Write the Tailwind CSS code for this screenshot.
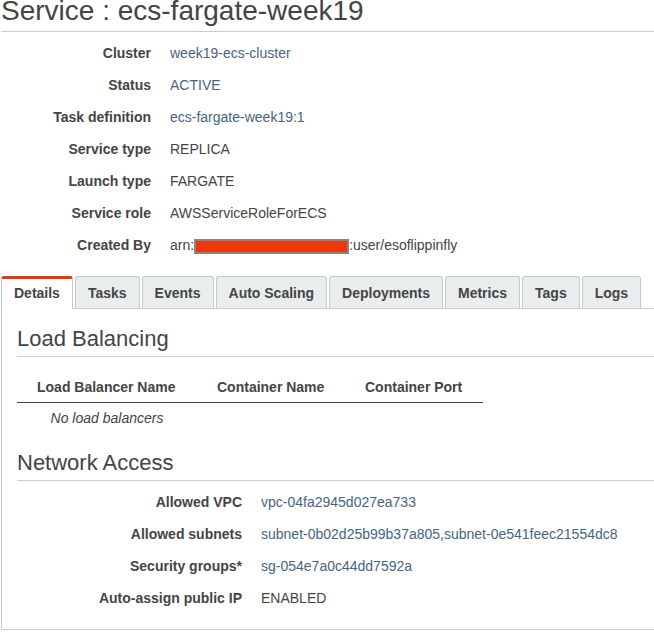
<!DOCTYPE html>
<html lang="en">
<head>
<meta charset="utf-8">
<meta name="viewport" content="width=device-width, initial-scale=1">
<title>Service : ecs-fargate-week19</title>
<script src="https://cdn.jsdelivr.net/npm/@tailwindcss/browser@4"></script>
</head>
<body class="bg-white font-['Liberation_Sans',Arial,sans-serif] text-sm text-[#444]">
<main class="pl-px">
  <h1 class="border-b border-[#c8cccc] pb-[9px] text-[28px] leading-[22px]">Service : ecs-fargate-week19</h1>

  <dl class="grid grid-cols-[150px_1fr] gap-x-[19px] pt-[5px] leading-8">
    <dt class="text-right font-bold">Cluster</dt>
    <dd><a href="#" class="text-[#456581]">week19-ecs-cluster</a></dd>
    <dt class="text-right font-bold">Status</dt>
    <dd class="text-[#456581]">ACTIVE</dd>
    <dt class="text-right font-bold">Task definition</dt>
    <dd><a href="#" class="text-[#456581]">ecs-fargate-week19:1</a></dd>
    <dt class="text-right font-bold">Service type</dt>
    <dd>REPLICA</dd>
    <dt class="text-right font-bold">Launch type</dt>
    <dd>FARGATE</dd>
    <dt class="text-right font-bold">Service role</dt>
    <dd>AWSServiceRoleForECS</dd>
    <dt class="text-right font-bold">Created By</dt>
    <dd class="flex items-center">arn:<span class="mt-[3px] h-[15px] w-[155px] border-2 border-[#8c8482] bg-[#ee380b]"></span>:user/esoflippinfly</dd>
  </dl>

  <div role="tablist" class="mt-[15px] flex gap-[2px] whitespace-nowrap font-bold">
    <button type="button" role="tab" aria-selected="true" class="relative z-10 -mb-px h-[33px] rounded-t-[3px] border-x border-t-[3px] border-[#c5cbcb] border-t-[#e8380d] bg-white px-3 pb-[3px]">Details</button>
    <button type="button" role="tab" class="h-8 rounded-t-[3px] border border-b-0 border-[#c5cbcb] bg-[#eaeded] px-3">Tasks</button>
    <button type="button" role="tab" class="h-8 rounded-t-[3px] border border-b-0 border-[#c5cbcb] bg-[#eaeded] px-3">Events</button>
    <button type="button" role="tab" class="h-8 rounded-t-[3px] border border-b-0 border-[#c5cbcb] bg-[#eaeded] px-3">Auto Scaling</button>
    <button type="button" role="tab" class="h-8 rounded-t-[3px] border border-b-0 border-[#c5cbcb] bg-[#eaeded] px-3">Deployments</button>
    <button type="button" role="tab" class="h-8 rounded-t-[3px] border border-b-0 border-[#c5cbcb] bg-[#eaeded] px-3">Metrics</button>
    <button type="button" role="tab" class="h-8 rounded-t-[3px] border border-b-0 border-[#c5cbcb] bg-[#eaeded] px-3">Tags</button>
    <button type="button" role="tab" class="h-8 rounded-t-[3px] border border-b-0 border-[#c5cbcb] bg-[#eaeded] px-3">Logs</button>
  </div>

  <div role="tabpanel" class="border-y border-l border-[#c8cccc] pb-[15px] pl-[15px]">
    <section>
      <h2 class="border-b border-[#c8cccc] pt-4 pb-[3px] text-[22px] leading-7">Load Balancing</h2>
      <table class="mt-[15px]">
        <thead>
          <tr class="border-b border-[#444]">
            <th class="w-[180px] px-5 pt-[3px] pb-[2px] text-left leading-[25px]">Load Balancer Name</th>
            <th class="w-[148px] px-5 pt-[3px] pb-[2px] text-left leading-[25px]">Container Name</th>
            <th class="w-[138px] px-5 pt-[3px] pb-[2px] text-left leading-[25px]">Container Port</th>
          </tr>
        </thead>
        <tbody>
          <tr>
            <td class="pb-[2px] text-center leading-[30px] italic">No load balancers</td>
            <td></td>
            <td></td>
          </tr>
        </tbody>
      </table>
    </section>

    <section>
      <h2 class="mt-[14px] border-b border-[#c8cccc] pb-[3px] text-[22px] leading-7">Network Access</h2>
      <dl class="grid grid-cols-[225px_1fr] gap-x-[19px] pt-[5px] leading-8">
        <dt class="text-right font-bold">Allowed VPC</dt>
        <dd><a href="#" class="text-[#456581]">vpc-04fa2945d027ea733</a></dd>
        <dt class="text-right font-bold">Allowed subnets</dt>
        <dd><a href="#" class="text-[#456581]">subnet-0b02d25b99b37a805</a>,<a href="#" class="text-[#456581]">subnet-0e541feec21554dc8</a></dd>
        <dt class="text-right font-bold">Security groups*</dt>
        <dd><a href="#" class="text-[#456581]">sg-054e7a0c44dd7592a</a></dd>
        <dt class="text-right font-bold">Auto-assign public IP</dt>
        <dd>ENABLED</dd>
      </dl>
    </section>
  </div>
</main>
</body>
</html>
